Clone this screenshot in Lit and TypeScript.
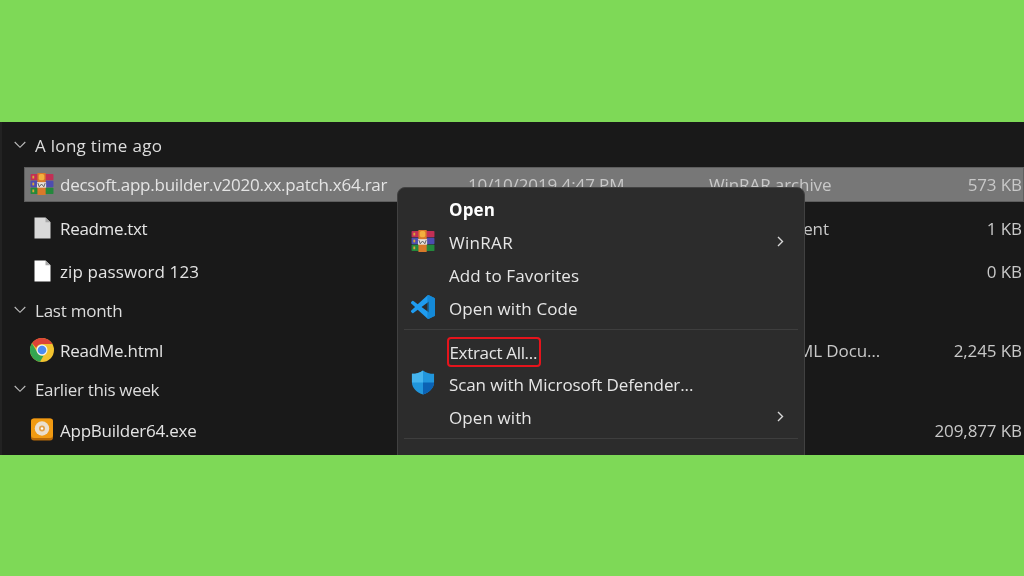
import { LitElement, html, css, svg } from "lit";
import { customElement } from "lit/decorators.js";

const rar = html`<svg width="24" height="22" viewBox="0 0 26 24">
  <rect x="0.500" y="1" width="25" height="7" rx="1" fill="#c22f55"/>
  <rect x="0.500" y="8.500" width="25" height="7" rx="1" fill="#4d4cb0"/>
  <rect x="0.500" y="16" width="25" height="7" rx="1" fill="#23883c"/>
  <rect x="2.500" y="3" width="2" height="3" fill="#d9a63a"/><rect x="2.500" y="10.500" width="2" height="3" fill="#d9a63a"/><rect x="2.500" y="18" width="2" height="3" fill="#d9a63a"/>
  <rect x="8" y="0" width="9" height="24" fill="#d9792a"/>
  <rect x="9.500" y="1" width="6" height="7" rx="2" fill="#f3b03f"/>
  <rect x="7.500" y="10" width="10" height="6" fill="#e4e0dc"/>
  <path d="M8.500 11l1.500 4 2.500-3 2.500 3 1.500-4" fill="none" stroke="#555" stroke-width="1"/>
</svg>`;

const chrome = html`<svg width="24" height="24" viewBox="0 0 48 48">
  <circle cx="24" cy="24" r="24" fill="#f2c32f"/>
  <path d="M24 0a24 24 0 0 1 20.800 12H24a12 12 0 0 0-11.400 8.200L4.200 10.600A24 24 0 0 1 24 0z" fill="#dc4437"/>
  <path d="M3.900 10.600L14 27.600A12 12 0 0 0 27 35.600L20 47.700A24 24 0 0 1 3.900 10.600z" fill="#34a551"/>
  <circle cx="24" cy="24" r="11" fill="#f1f3f4"/><circle cx="24" cy="24" r="8.600" fill="#4d8cf0"/>
</svg>`;

const doc = (fill: string) => html`<svg width="17" height="22" viewBox="0 0 17 23" preserveAspectRatio="none">
  <path d="M.5 .5H11.500L16.500 5.500V22.500H.5Z" fill=${fill}/><path d="M11.500 .5V5.500H16.500Z" fill="#a9a9a9"/>
</svg>`;

const app = html`<svg width="24" height="24" viewBox="0 0 24 24">
  <rect x="1" y="0.500" width="22" height="22" rx="3" fill="#b86a08"/>
  <rect x="1" y="0.500" width="22" height="19.500" rx="3" fill="#f09a12"/>
  <circle cx="12" cy="10.500" r="7.200" fill="#eadfce"/>
  <circle cx="12" cy="10.500" r="3" fill="#e2a24a"/><circle cx="12" cy="10.500" r="1.200" fill="#fff"/>
</svg>`;

const vscode = html`<svg width="24" height="24" viewBox="0 0 100 100">
  <path d="M96 11 75 1a6 6 0 0 0-7 1L28 39 10 25a4 4 0 0 0-5 0l-4 4a4 4 0 0 0 0 6l16 15L1 65a4 4 0 0 0 0 6l4 4a4 4 0 0 0 5 0l18-14 40 37a6 6 0 0 0 7 1l21-10a6 6 0 0 0 4-6V17a6 6 0 0 0-4-6zM75 73 44 50l31-23z" fill="#1f9cf0"/>
  <path d="M75 1a6 6 0 0 0-7 1L68 98a6 6 0 0 0 7 1l21-10a6 6 0 0 0 4-6V17a6 6 0 0 0-4-6z" fill="#0f7fc9" opacity=".65"/>
</svg>`;

const shield = html`<svg width="24" height="25" viewBox="0 0 24 26">
  <path d="M12 .5C15 3 19 4 23.500 4V13C23.500 19 18 23.500 12 25.500C6 23.500 .5 19 .5 13V4C5 4 9 3 12 .5Z" fill="#2196dc"/>
  <path d="M12 .5C9 3 5 4 .5 4V13H12Z" fill="#45b4ee"/>
  <path d="M12 13H23.500C23.500 19 18 23.500 12 25.500Z" fill="#0b62b4"/>
</svg>`;

const chevDown = html`<svg class="twisty" width="12" height="8" viewBox="0 0 12 8"><path d="M.7 1 6 6.300 11.300 1" fill="none" stroke="#bdbdbd" stroke-width="1.100"/></svg>`;
const chevRight = svg`<path d="M1 1 5.500 5.500 1 10" fill="none" stroke="#d8d8d8" stroke-width="1.400"/>`;

interface Row { kind: "head" | "file"; name: string; gap: string; fit: string; icon?: unknown; date?: string; type?: string; size?: string; selected?: boolean; }

const rows: Row[] = [
  { kind: "head", name: "A long time ago", gap: "g6", fit: "wide" },
  { kind: "file", name: "decsoft.app.builder.v2020.xx.patch.x64.rar", gap: "g3", fit: "tight", icon: rar, date: "10/10/2019 4:47 PM", type: "WinRAR archive", size: "573 KB", selected: true },
  { kind: "file", name: "Readme.txt", gap: "g8", fit: "tighter", icon: doc("#d9d9d9"), type: "Text Document", size: "1 KB" },
  { kind: "file", name: "zip password 123", gap: "g7", fit: "plain", icon: doc("#ffffff"), size: "0 KB" },
  { kind: "head", name: "Last month", gap: "g3", fit: "tight" },
  { kind: "file", name: "ReadMe.html", gap: "g4", fit: "tight", icon: chrome, type: "Chrome HTML Document", size: "2,245 KB" },
  { kind: "head", name: "Earlier this week", gap: "g3", fit: "tighter" },
  { kind: "file", name: "AppBuilder64.exe", gap: "g5", fit: "tight", icon: app, size: "209,877 KB" },
];

interface Item { label?: string; icon?: unknown; bold?: boolean; sub?: boolean; hl?: boolean; sep?: boolean; fit?: string; }
const items: Item[] = [
  { label: "Open", bold: true, fit: "plain" },
  { label: "WinRAR", icon: rar, sub: true, fit: "wide" },
  { label: "Add to Favorites", fit: "plain" },
  { label: "Open with Code", icon: vscode, fit: "plain" },
  { sep: true },
  { label: "Extract All...", hl: true, fit: "tighter" },
  { label: "Scan with Microsoft Defender...", icon: shield, fit: "base" },
  { label: "Open with", sub: true, fit: "plain" },
  { sep: true },
];

@customElement("app-root")
export class AppRoot extends LitElement {
  static styles = css`
    :host { display: flex; flex-direction: column; width: 1024px; height: 576px; background: #7ed957; overflow: hidden;
      font-family: "Open Sans", "Noto Sans", sans-serif; font-size: 17px; letter-spacing: -0.1px; }
    .top { height: 122px; flex: none; }
    .bottom { flex: 1; }
    .panel { position: relative; height: 333px; flex: none; background: #191919; color: #e4e4e4; overflow: hidden; display: flex; flex-direction: column; border-left: 2px solid #222; box-sizing: border-box; }
    .row { flex: none; height: 36px; padding-bottom: 2px; display: flex; align-items: center; box-sizing: border-box; white-space: nowrap; filter: blur(0.3px); }
    .g3 { margin-top: 3px; } .g4 { margin-top: 4px; } .g5 { margin-top: 5px; } .g6 { margin-top: 6px; } .g7 { margin-top: 7px; } .g8 { margin-top: 8px; }
    .wide { letter-spacing: 0.3px; }
    .plain { letter-spacing: 0.1px; }
    .base { letter-spacing: -0.1px; }
    .tight { letter-spacing: -0.24px; }
    .tighter { letter-spacing: -0.33px; }
    .head { padding-left: 12px; gap: 9px; color: #dcdcdc; }
    .twisty { flex: none; }
    .file { margin-left: 22px; padding-left: 5px; border: 1px solid transparent; }
    .file.selected { background: #777; border-color: #5e5e5e; height: 35px; padding-bottom: 1px; margin-bottom: 1px; }
    .ic { flex: none; width: 24px; height: 26px; display: flex; align-items: center; justify-content: center; margin-right: 6px; }
    .name { flex: none; width: 408px; }
    .date { flex: none; width: 241px; color: #c8c8c8; }
    .type { flex: none; width: 173px; color: #c8c8c8; overflow: hidden; text-overflow: ellipsis; }
    .size { flex: 1; text-align: right; padding-right: 1px; color: #c8c8c8; }
    .menu { position: absolute; left: 395px; top: 65px; width: 408px; height: 300px; box-sizing: border-box; padding: 5px 4px; background: #2c2c2c; border: 1px solid #414141; border-radius: 8px; color: #e6e6e6; display: flex; flex-direction: column; }
    .item { flex: none; height: 33px; display: flex; align-items: center; position: relative; filter: blur(0.3px); }
    .mi { flex: none; width: 38px; margin: 0 7px 4px 2px; display: flex; justify-content: center; }
    .label { flex: 1; }
    .bold { font-weight: 700; color: #fff; }
    .arrow { flex: none; margin: 0 16px 3px 0; }
    .sep { flex: none; height: 1px; background: #3e3e3e; margin: 4px 2px 5px; }
    .hl { flex: none; align-self: stretch; margin: 2px 0 1px -2px; padding: 0 1.500px 0 .5px; border: 2.500px solid #e5141c; border-radius: 4px; display: flex; align-items: center; }
  `;

  render() {
    return html`
      <div class="top"></div>
      <div class="panel">
        ${rows.map((r) => r.kind === "head"
          ? html`<div class="row head ${r.gap}">${chevDown}<span class=${r.fit}>${r.name}</span></div>`
          : html`<div class="row file ${r.gap} ${r.selected ? "selected" : ""}">
              <span class="ic">${r.icon}</span>
              <span class="name ${r.fit}">${r.name}</span>
              <span class="date">${r.date ?? ""}</span>
              <span class="type">${r.type ?? ""}</span>
              <span class="size">${r.size}</span>
            </div>`)}
        <div class="menu">
          ${items.map((it) => it.sep
            ? html`<div class="sep"></div>`
            : html`<div class="item">
                <span class="mi">${it.icon ?? ""}</span>
                ${it.hl
                  ? html`<span class="hl ${it.fit}">${it.label}</span>`
                  : html`<span class="label ${it.fit} ${it.bold ? "bold" : ""}">${it.label}</span>`}
                ${it.sub ? html`<svg class="arrow" width="7" height="11" viewBox="0 0 7 11">${chevRight}</svg>` : ""}
              </div>`)}
        </div>
      </div>
      <div class="bottom"></div>
    `;
  }
}
